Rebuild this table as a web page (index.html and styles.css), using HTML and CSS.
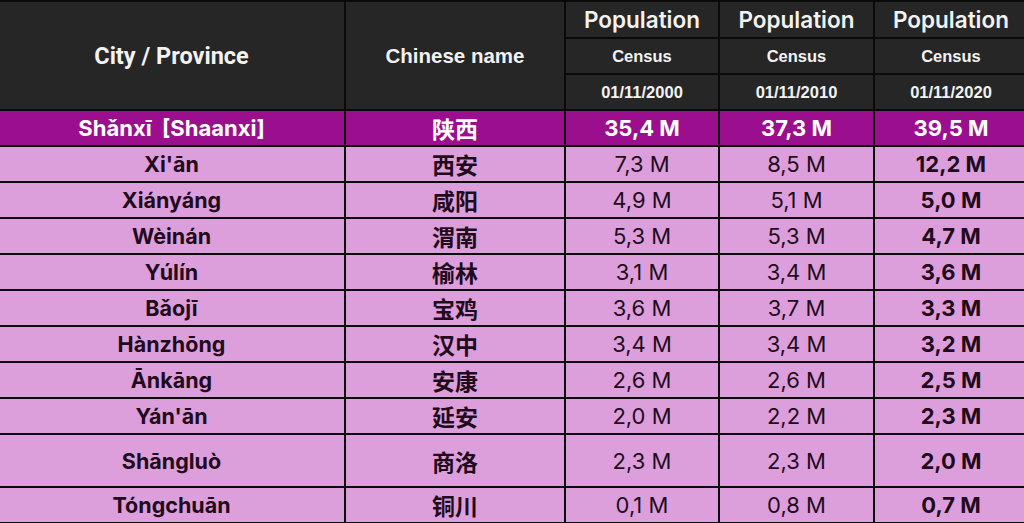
FILE: index.html
```html
<!DOCTYPE html>
<html>
<head>
<meta charset="utf-8">
<link rel="stylesheet" href="styles.css">
</head>
<body>
<table class="pop">
  <colgroup>
    <col class="c-city"><col class="c-cn"><col class="c-num"><col class="c-num2"><col class="c-last">
  </colgroup>
  <thead>
    <tr class="h1">
      <th rowspan="3" class="big">City / Province</th>
      <th rowspan="3" class="big2">Chinese name</th>
      <th class="popl">Population</th>
      <th class="popl">Population</th>
      <th class="popl">Population</th>
    </tr>
    <tr class="h2">
      <th class="small">Census</th><th class="small">Census</th><th class="small">Census</th>
    </tr>
    <tr class="h3">
      <th class="small">01/11/2000</th><th class="small">01/11/2010</th><th class="small">01/11/2020</th>
    </tr>
  </thead>
  <tbody>
    <tr class="prov">
      <td class="name">Shǎnxī&nbsp; [Shaanxi]</td><td class="cn">陕西</td><td>35,4 M</td><td>37,3 M</td><td>39,5 M</td>
    </tr>
    <tr><td class="name">Xi'ān</td><td class="cn">西安</td><td>7,3 M</td><td>8,5 M</td><td class="b">12,2 M</td></tr>
    <tr><td class="name">Xiányáng</td><td class="cn">咸阳</td><td>4,9 M</td><td>5,1 M</td><td class="b">5,0 M</td></tr>
    <tr><td class="name">Wèinán</td><td class="cn">渭南</td><td>5,3 M</td><td>5,3 M</td><td class="b">4,7 M</td></tr>
    <tr><td class="name">Yúlín</td><td class="cn">榆林</td><td>3,1 M</td><td>3,4 M</td><td class="b">3,6 M</td></tr>
    <tr><td class="name">Bǎojī</td><td class="cn">宝鸡</td><td>3,6 M</td><td>3,7 M</td><td class="b">3,3 M</td></tr>
    <tr><td class="name">Hànzhōng</td><td class="cn">汉中</td><td>3,4 M</td><td>3,4 M</td><td class="b">3,2 M</td></tr>
    <tr><td class="name">Ānkāng</td><td class="cn">安康</td><td>2,6 M</td><td>2,6 M</td><td class="b">2,5 M</td></tr>
    <tr><td class="name">Yán'ān</td><td class="cn">延安</td><td>2,0 M</td><td>2,2 M</td><td class="b">2,3 M</td></tr>
    <tr class="tall"><td class="name">Shāngluò</td><td class="cn">商洛</td><td>2,3 M</td><td>2,3 M</td><td class="b">2,0 M</td></tr>
    <tr><td class="name">Tóngchuān</td><td class="cn">铜川</td><td>0,1 M</td><td>0,8 M</td><td class="b">0,7 M</td></tr>
  </tbody>
</table>
</body>
</html>
```

FILE: styles.css
```css
html, body {
  margin: 0;
  padding: 0;
  background: #ffffff;
  overflow: hidden;
}

.pop {
  border-collapse: collapse;
  table-layout: fixed;
  width: 1030px;
  margin-left: -3px;
  font-family: Inter, "Noto Sans", "Noto Sans CJK SC", sans-serif;
  color: #1f0b1c;
}

.c-city { width: 347px; }
.c-cn { width: 220px; }
.c-num { width: 154px; }
.c-num2 { width: 155px; }
.c-last { width: 154px; }

.pop th, .pop td {
  border: 2px solid #0a0a0a;
  padding: 0;
  text-align: center;
  vertical-align: middle;
  white-space: nowrap;
  overflow: hidden;
}

.pop thead th {
  background: #262626;
  color: #f2f2f2;
}

.h1 { height: 37px; }
.h2 { height: 36px; }
.h3 { height: 36px; }

.big {
  font-family: Roboto, "Liberation Sans", sans-serif;
  font-weight: 700;
  font-size: 23.5px;
}

.big2 {
  font-family: "Liberation Sans", Arial, sans-serif;
  font-weight: 700;
  font-size: 20.5px;
}

.popl {
  font-family: Inter, "Liberation Sans", sans-serif;
  font-weight: 600;
  font-size: 22.5px;
}

.small {
  font-family: "Liberation Sans", Arial, sans-serif;
  font-weight: 700;
  font-size: 16.5px;
}

.pop tbody tr { height: 36px; }
.pop tbody tr.tall { height: 53px; }

.pop tbody td {
  background: #dc9fdb;
  font-size: 22px;
  font-weight: 400;
}

.pop tbody td.name {
  font-weight: 700;
  font-size: 21.5px;
}

.pop tbody tr.prov td.name {
  font-size: 22px;
}

.pop tbody td.cn {
  font-family: "Noto Sans CJK SC", sans-serif;
  font-weight: 700;
  font-size: 23px;
}

.pop tbody td.b { font-weight: 700; }

.pop tbody tr.prov td {
  background: #9b0f8e;
  color: #ffffff;
  font-weight: 700;
}
```
